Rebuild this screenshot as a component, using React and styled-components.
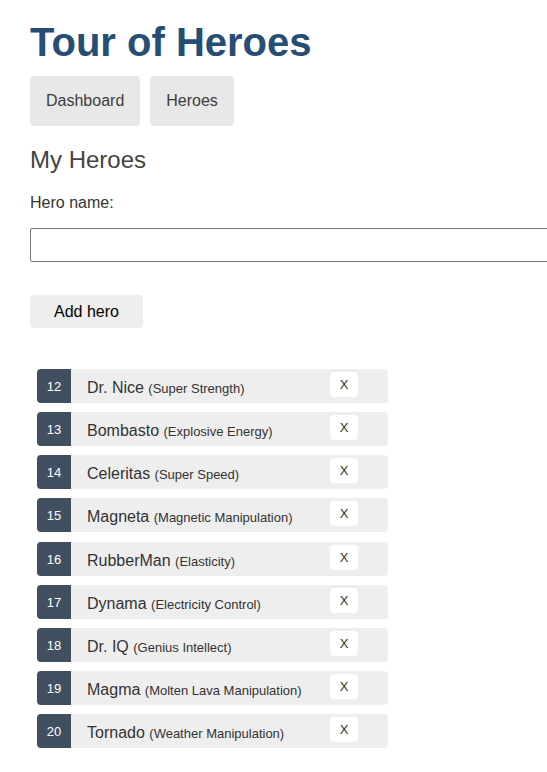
import React, { useState } from 'react';
import styled, { createGlobalStyle } from 'styled-components';

const GlobalStyle = createGlobalStyle`
  body {
    margin: 0;
    font-family: "Liberation Sans", Arial, Helvetica, sans-serif;
    color: #333;
    background: #fff;
    overflow: hidden;
  }
`;

const Page = styled.div`
  padding: 0 30px;
`;

const Title = styled.h1`
  margin: 19px 0 11px;
  font-size: 40px;
  line-height: 46px;
  font-weight: bold;
  color: #264d73;
`;

const Nav = styled.nav`
  display: flex;
  gap: 10px;
`;

const NavLink = styled.a`
  display: inline-block;
  padding: 16px;
  font-size: 16px;
  line-height: 18px;
  color: #3d3d3d;
  background-color: #e8e8e8;
  border-radius: 4px;
  text-decoration: none;
  cursor: pointer;
`;

const Heading = styled.h2`
  margin: 20px 0 0;
  font-size: 24px;
  line-height: 28px;
  font-weight: normal;
  color: #444;
`;

const Label = styled.label`
  display: block;
  margin-top: 20px;
  font-size: 16px;
  line-height: 18px;
`;

const NameInput = styled.input`
  display: block;
  box-sizing: border-box;
  width: 540px;
  height: 34px;
  margin: 16px 0 0;
  padding: 8px;
  font-size: 16px;
  border: 1px solid #767676;
  border-radius: 2px;
`;

const AddButton = styled.button`
  display: block;
  margin-top: 33px;
  padding: 8px 24px;
  font-family: inherit;
  font-size: 16px;
  line-height: 17px;
  color: #000;
  background-color: #eee;
  border: none;
  border-radius: 4px;
  cursor: pointer;
`;

const HeroList = styled.ul`
  list-style: none;
  margin: 41px 0 0 7px;
  padding: 0;
  display: flex;
  flex-direction: column;
  gap: 9.15px;
  width: 351px;
`;

const HeroRow = styled.li`
  display: flex;
  align-items: center;
  height: 34px;
  background-color: #eee;
  border-radius: 4px;
  cursor: pointer;
`;

const Badge = styled.span`
  display: flex;
  align-items: center;
  justify-content: center;
  align-self: stretch;
  width: 34px;
  padding-top: 1px;
  font-size: 13px;
  color: #fff;
  background-color: #405061;
  border-radius: 4px 0 0 4px;
`;

const Name = styled.span`
  margin-left: 16px;
  padding-top: 4px;
  font-size: 16px;
  color: #333;
`;

const Power = styled.span`
  font-size: 13px;
`;

const DeleteButton = styled.button`
  margin-left: auto;
  margin-right: 30px;
  margin-bottom: 3px;
  width: 28px;
  height: 25px;
  padding: 0;
  font-family: inherit;
  font-size: 13px;
  color: #333;
  background-color: #fff;
  border: none;
  border-radius: 4px;
  cursor: pointer;
`;

const initialHeroes = [
  { id: 12, name: 'Dr. Nice', power: 'Super Strength' },
  { id: 13, name: 'Bombasto', power: 'Explosive Energy' },
  { id: 14, name: 'Celeritas', power: 'Super Speed' },
  { id: 15, name: 'Magneta', power: 'Magnetic Manipulation' },
  { id: 16, name: 'RubberMan', power: 'Elasticity' },
  { id: 17, name: 'Dynama', power: 'Electricity Control' },
  { id: 18, name: 'Dr. IQ', power: 'Genius Intellect' },
  { id: 19, name: 'Magma', power: 'Molten Lava Manipulation' },
  { id: 20, name: 'Tornado', power: 'Weather Manipulation' },
];

export default function App() {
  const [heroes, setHeroes] = useState(initialHeroes);
  const [name, setName] = useState('');

  const addHero = () => {
    const trimmed = name.trim();
    if (!trimmed) return;
    const nextId = heroes.length ? Math.max(...heroes.map(h => h.id)) + 1 : 11;
    setHeroes([...heroes, { id: nextId, name: trimmed, power: 'Unknown' }]);
    setName('');
  };

  return (
    <Page>
      <GlobalStyle />
      <Title>Tour of Heroes</Title>
      <Nav>
        <NavLink>Dashboard</NavLink>
        <NavLink>Heroes</NavLink>
      </Nav>
      <Heading>My Heroes</Heading>
      <Label htmlFor="new-hero">Hero name: </Label>
      <NameInput id="new-hero" value={name} onChange={e => setName(e.target.value)} />
      <AddButton onClick={addHero}>Add hero</AddButton>
      <HeroList>
        {heroes.map(hero => (
          <HeroRow key={hero.id}>
            <Badge>{hero.id}</Badge>
            <Name>
              {hero.name} <Power>({hero.power})</Power>
            </Name>
            <DeleteButton
              title="delete hero"
              onClick={() => setHeroes(heroes.filter(h => h.id !== hero.id))}
            >
              X
            </DeleteButton>
          </HeroRow>
        ))}
      </HeroList>
    </Page>
  );
}
